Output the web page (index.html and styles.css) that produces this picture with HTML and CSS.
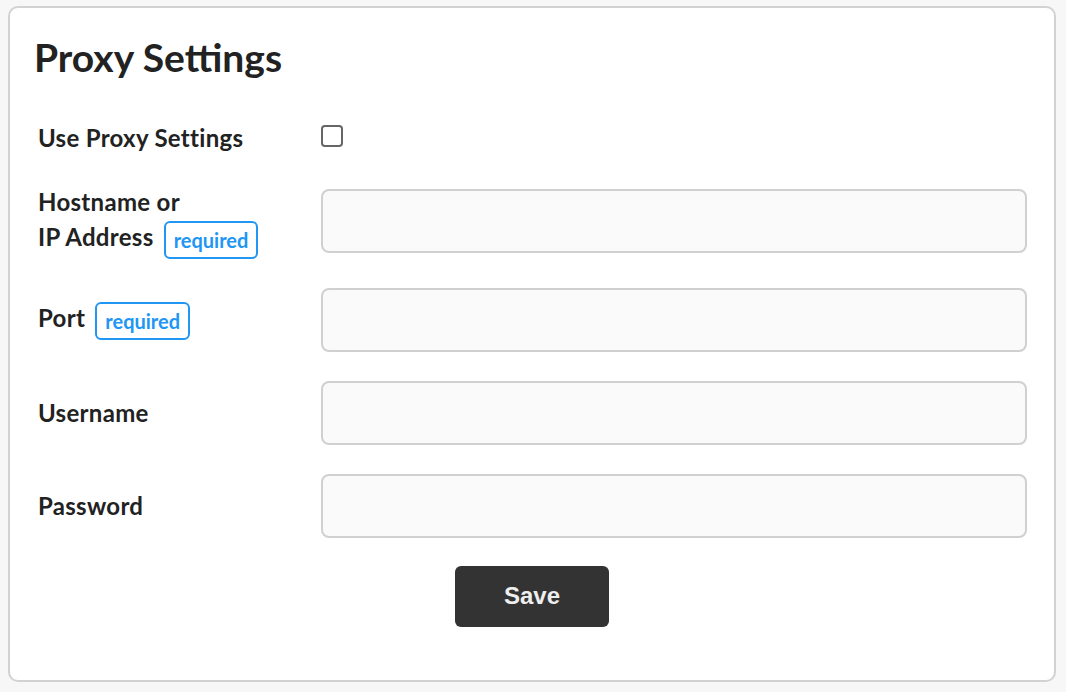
FILE: index.html
```html
<!DOCTYPE html>
<html>
<head>
<meta charset="utf-8">
<link rel="stylesheet" href="styles.css">
</head>
<body>
<div class="card">
  <h1 class="title">Proxy Settings</h1>
  <form class="form">
    <div class="label">Use Proxy Settings</div>
    <div class="field cb-field"><span class="checkbox"></span></div>

    <div class="label">Hostname or<br>IP Address <span class="badge">required</span></div>
    <div class="field"><span class="input"></span></div>

    <div class="label">Port <span class="badge">required</span></div>
    <div class="field"><span class="input"></span></div>

    <div class="label">Username</div>
    <div class="field"><span class="input"></span></div>

    <div class="label">Password</div>
    <div class="field"><span class="input"></span></div>

    <div class="actions"><button type="button" class="save">Save</button></div>
  </form>
</div>
</body>
</html>
```
FILE: styles.css
```css
html, body {
  margin: 0;
  padding: 0;
  background: #f7f7f7;
}
body {
  padding: 6px 10px 10px 8px;
  font-family: Lato, "Noto Sans", sans-serif;
  color: #222;
}
.card {
  background: #fff;
  border: 2px solid #d2d2d2;
  border-radius: 10px;
  padding: 0 27px 0 28px;
  height: 676px;
  box-sizing: border-box;
}
.title {
  margin: 0;
  padding-top: 24px;
  font-size: 39px;
  font-weight: 700;
  line-height: 50px;
  margin-left: -4px;
  color: #222;
}
.form {
  display: grid;
  grid-template-columns: 283px 1fr;
  row-gap: 29px;
  margin-top: 38px;
  align-items: center;
}
.label {
  font-size: 24px;
  font-weight: 700;
  line-height: 35px;
  letter-spacing: 0.3px;
  color: #222;
}
.cb-field {
  height: 35px;
  display: flex;
  align-items: center;
}
.checkbox {
  display: block;
  width: 22px;
  height: 22px;
  box-sizing: border-box;
  border: 2px solid #666;
  border-radius: 4px;
  margin-top: -3px;
}
.input {
  display: block;
  height: 64px;
  box-sizing: border-box;
  border: 2px solid #d0d0d0;
  border-radius: 8px;
  background: #fafafa;
}
.badge {
  display: inline-block;
  vertical-align: middle;
  margin-left: 4px;
  height: 38px;
  box-sizing: border-box;
  border: 2px solid #2196f3;
  border-radius: 6px;
  padding: 0 8px;
  color: #2196f3;
  font-size: 20px;
  line-height: 34px;
  font-weight: 700;
  letter-spacing: 0;
}
.actions {
  grid-column: 1 / 3;
  display: flex;
  justify-content: center;
  margin-top: -1px;
  margin-left: -1px;
}
.save {
  width: 154px;
  height: 61px;
  background: #333;
  color: #eee;
  border: none;
  border-radius: 6px;
  font-family: "Liberation Sans", Arial, sans-serif;
  font-weight: 700;
  font-size: 24px;
  padding: 0;
}
```
